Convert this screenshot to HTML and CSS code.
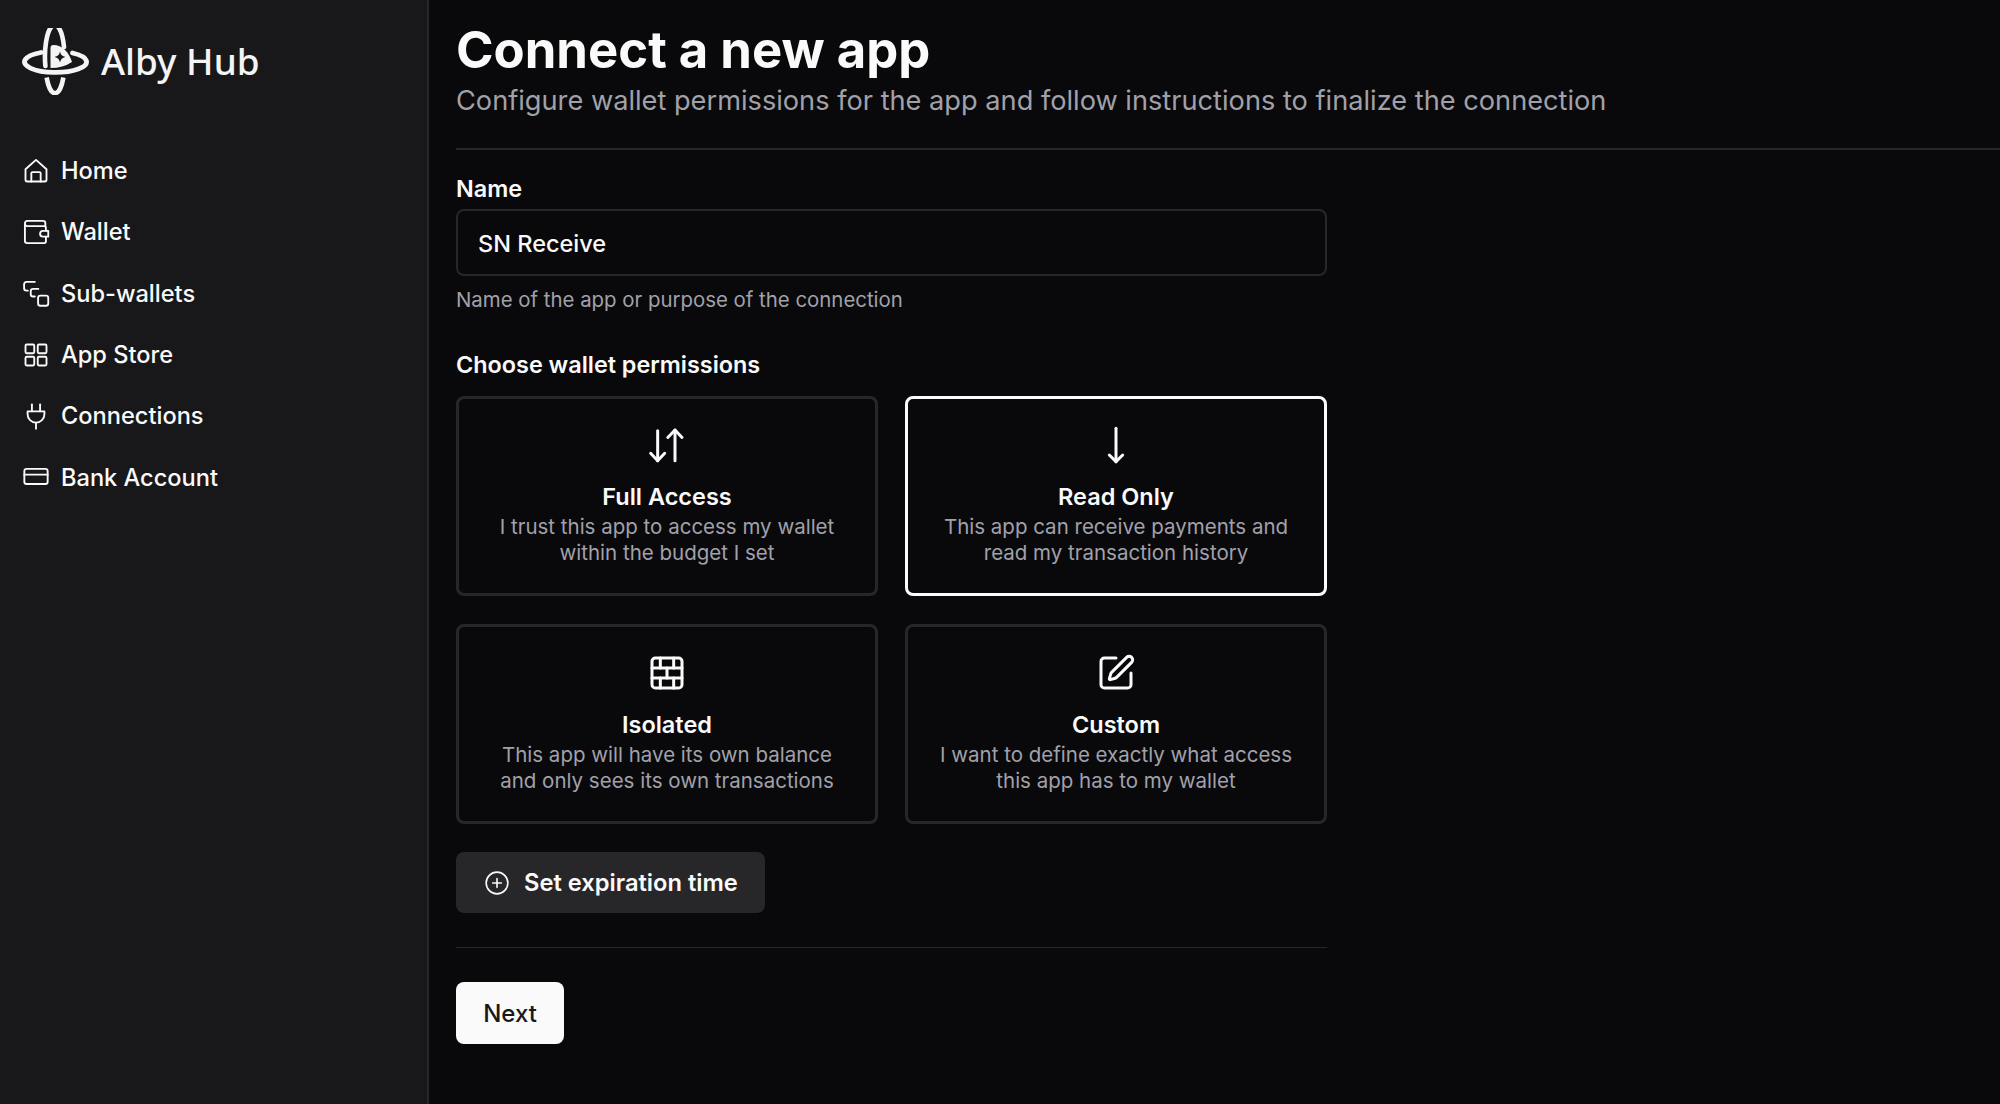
FILE: index.html
```html
<!DOCTYPE html>
<html lang="en">
<head>
<meta charset="utf-8">
<title>Alby Hub</title>
<link rel="stylesheet" href="styles.css">
</head>
<body>
<div class="shell">
  <aside class="sidebar">
    <div class="brand">
      <svg class="logo" viewBox="0 0 67 67" fill="none" stroke="#f4f4f5" stroke-width="4.800" stroke-linecap="round">
        <path d="M19 24.500A31 10.600 0 1 0 50.500 25"/>
        <path d="M23.400 38A9.700 31.500 0 0 1 42 19" stroke-width="4.600"/>
        <path d="M24.600 49.500A9.700 31.500 0 0 0 41.400 49.500" stroke-width="4.600" stroke-linecap="butt"/>
        <path d="M28.500 20Q28.500 17 31.500 17C40 17 47 24 50 34Q41 40 28.500 40Z" fill="#f4f4f5" stroke="none"/>
        <path d="M38 23.500Q38.800 28.200 43.500 29Q38.800 29.800 38 34.500Q37.200 29.800 32.500 29Q37.200 28.200 38 23.500Z" fill="#18181b" stroke="none"/>
      </svg>
      <span class="brand-name">Alby Hub</span>
    </div>
    <nav class="nav">
      <a class="nav-item">
        <svg class="nav-icon" viewBox="0 0 24 24"><path d="M3 10.500 12 2.500l9 8V19.500a1.500 1.500 0 0 1-1.500 1.500h-15A1.500 1.500 0 0 1 3 19.500Z"/><path d="M8 21v-7a1 1 0 0 1 1-1h6a1 1 0 0 1 1 1v7"/></svg>
        <span>Home</span>
      </a>
      <a class="nav-item">
        <svg class="nav-icon" viewBox="0 0 24 24"><path d="M20 7V4.500a2 2 0 0 0-2-2H4.500a2 2 0 0 0-2 2v15a2 2 0 0 0 2 2H19a1.500 1.500 0 0 0 1.500-1.500V16"/><path d="M2.500 5a2 2 0 0 0 2 2H19a1.500 1.500 0 0 1 1.500 1.500V11"/><path d="M22.500 11H18a2.500 2.500 0 0 0 0 5h4.500z"/></svg>
        <span>Wallet</span>
      </a>
      <a class="nav-item">
        <svg class="nav-icon" viewBox="0 0 24 24"><path d="M11 2.500H3.800a2 2 0 0 0-2 2V8a2 2 0 0 0 2 2H5"/><path d="M14 8.500H9.500a2 2 0 0 0-2 2V13a2 2 0 0 0 2 2H11"/><rect x="13.800" y="14.200" width="8.700" height="8.700" rx="2"/></svg>
        <span>Sub-wallets</span>
      </a>
      <a class="nav-item">
        <svg class="nav-icon" viewBox="0 0 24 24"><rect x="3" y="3" width="7.500" height="7.500" rx="1"/><rect x="13.500" y="3" width="7.500" height="7.500" rx="1"/><rect x="3" y="13.500" width="7.500" height="7.500" rx="1"/><rect x="13.500" y="13.500" width="7.500" height="7.500" rx="1"/></svg>
        <span>App Store</span>
      </a>
      <a class="nav-item">
        <svg class="nav-icon" viewBox="0 0 24 24"><path d="M8.500 2v6"/><path d="M15.500 2v6"/><path d="M4.800 8h14.400v2.500a7.200 7.200 0 0 1-14.400 0z"/><path d="M12 17.700V23"/></svg>
        <span>Connections</span>
      </a>
      <a class="nav-item">
        <svg class="nav-icon" viewBox="0 0 24 24"><rect x="2" y="5" width="20" height="13" rx="2"/><path d="M2 10h20"/></svg>
        <span>Bank Account</span>
      </a>
    </nav>
  </aside>
  <main class="main">
    <header class="page-head">
      <h1 class="title">Connect a new app</h1>
      <p class="subtitle">Configure wallet permissions for the app and follow instructions to finalize the connection</p>
    </header>
    <form class="form">
      <label class="label label-name" for="name">Name</label>
      <input class="input" id="name" value="SN Receive">
      <p class="hint">Name of the app or purpose of the connection</p>
      <div class="label label-perm">Choose wallet permissions</div>
      <div class="cards">
        <div class="card">
          <svg class="card-icon" viewBox="0 0 24 24"><path d="M2.200 17 6.400 21.400 10.600 17"/><path d="M6.400 21.400V3.500"/><path d="M12.500 7.500 16.800 3 21 7.500"/><path d="M16.800 3V21.400"/></svg>
          <div class="card-title">Full Access</div>
          <div class="card-text">I trust this app to access my wallet<br>within the budget I set</div>
        </div>
        <div class="card card-selected">
          <svg class="card-icon" viewBox="0 0 24 24"><path d="M8 18 12 22 16 18"/><path d="M12 2V22"/></svg>
          <div class="card-title">Read Only</div>
          <div class="card-text">This app can receive payments and<br>read my transaction history</div>
        </div>
        <div class="card">
          <svg class="card-icon" viewBox="0 0 24 24"><rect x="3" y="3" width="18" height="18" rx="2"/><path d="M12 9v6"/><path d="M16 15v6"/><path d="M16 3v6"/><path d="M3 15h18"/><path d="M3 9h18"/><path d="M8 15v6"/><path d="M8 3v6"/></svg>
          <div class="card-title">Isolated</div>
          <div class="card-text">This app will have its own balance<br>and only sees its own transactions</div>
        </div>
        <div class="card">
          <svg class="card-icon" viewBox="0 0 24 24"><path d="M12 3H5a2 2 0 0 0-2 2v14a2 2 0 0 0 2 2h14a2 2 0 0 0 2-2v-7"/><path d="M18.375 2.625a1 1 0 0 1 3 3l-9.013 9.014a2 2 0 0 1-.853.505l-2.873.84a.5.5 0 0 1-.62-.62l.84-2.873a2 2 0 0 1 .506-.852z"/></svg>
          <div class="card-title">Custom</div>
          <div class="card-text">I want to define exactly what access<br>this app has to my wallet</div>
        </div>
      </div>
      <button class="btn-secondary" type="button">
        <svg class="btn-icon" viewBox="0 0 24 24"><circle cx="12" cy="12" r="10"/><path d="M8 12h8"/><path d="M12 8v8"/></svg>
        <span>Set expiration time</span>
      </button>
      <hr class="rule">
      <button class="btn-primary" type="button">Next</button>
    </form>
  </main>
</div>
</body>
</html>
```
FILE: styles.css
```css
* { box-sizing: border-box; }
html, body { margin: 0; height: 100%; }
body {
  background: #09090b;
  color: #fafafa;
  font-family: Inter, "Liberation Sans", sans-serif;
  overflow: hidden;
}
.shell { display: flex; height: 1104px; }
.sidebar {
  width: 429px;
  flex: none;
  background: #18181b;
  border-right: 2px solid #27272a;
  padding: 28px 22px 0;
}
.brand { display: flex; align-items: center; gap: 12px; height: 66px; }
.logo { width: 67px; height: 67px; flex: none; }
.brand-name {
  font-family: "Noto Sans", sans-serif;
  font-size: 36.800px;
  font-weight: 500;
  color: #f4f4f5;
}
.nav { display: flex; flex-direction: column; margin-top: 46px; }
.nav-item {
  display: flex;
  align-items: center;
  gap: 11px;
  height: 61.300px;
  font-size: 23.600px;
  font-weight: 500;
  color: #fafafa;
}
.nav-icon {
  width: 28px;
  height: 28px;
  flex: none;
  fill: none;
  stroke: #fafafa;
  stroke-width: 1.600;
  stroke-linecap: round;
  stroke-linejoin: round;
}
.main { flex: 1; min-width: 0; padding: 0 0 0 27px; }
.page-head { border-bottom: 2px solid #27272a; height: 150px; padding-top: 20px; }
.title { margin: 0; font-size: 50.800px; line-height: 60px; font-weight: 700; color: #fafafa; }
.subtitle { margin: 2px 0 0; font-size: 27.200px; line-height: 38px; color: #a1a1aa; }
.form { width: 871px; display: flex; flex-direction: column; align-items: flex-start; }
.label { font-size: 23.400px; font-weight: 600; line-height: 28px; color: #fafafa; }
.label-name { margin-top: 25px; }
.input {
  width: 100%;
  height: 67px;
  margin-top: 6px;
  padding: 1px 20px 0;
  background: transparent;
  border: 2px solid #27272a;
  border-radius: 8px;
  color: #fafafa;
  font: 500 23.500px Inter, sans-serif;
}
.hint { margin: 10px 0 0; font-size: 20.400px; line-height: 28px; color: #a1a1aa; }
.label-perm { margin-top: 37px; }
.cards {
  display: grid;
  width: 100%;
  grid-template-columns: 1fr 1fr;
  gap: 28px 27px;
  margin-top: 17px;
}
.card {
  height: 200px;
  padding-top: 26px;
  border: 3px solid #27272a;
  border-radius: 8px;
  display: flex;
  flex-direction: column;
  align-items: center;
  text-align: center;
}
.card-selected { border-color: #fafafa; }
.card-icon {
  width: 40px;
  height: 40px;
  fill: none;
  stroke: #fafafa;
  stroke-width: 1.800;
  stroke-linecap: round;
  stroke-linejoin: round;
}
.card-title { margin-top: 17px; font-size: 23.500px; line-height: 30px; font-weight: 600; color: #fafafa; }
.card-text { margin-top: 2px; font-size: 20.500px; line-height: 26px; color: #a1a1aa; }
.btn-secondary {
  display: flex;
  align-items: center;
  gap: 14px;
  height: 61px;
  margin-top: 28px;
  padding: 0 27px 0 28px;
  border: 0;
  border-radius: 8px;
  background: #27272a;
  color: #fafafa;
  font: 600 23.700px Inter, sans-serif;
}
.btn-icon {
  width: 26px;
  height: 26px;
  fill: none;
  stroke: #fafafa;
  stroke-width: 1.500;
  stroke-linecap: round;
  stroke-linejoin: round;
}
.rule { width: 100%; height: 1px; margin: 34px 0; border: 0; background: #27272a; }
.btn-primary {
  height: 62px;
  width: 108px;
  border: 0;
  border-radius: 8px;
  background: #fafafa;
  color: #18181b;
  font: 500 24px Inter, sans-serif;
}
```
